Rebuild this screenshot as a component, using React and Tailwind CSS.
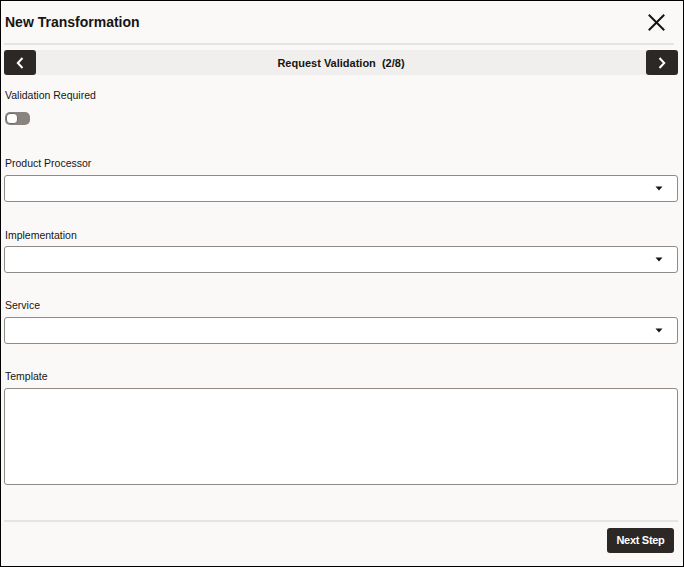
import React from "react";

function Caret() {
  return (
    <svg width="8" height="5" viewBox="0 0 8 5" className="mr-[14px]">
      <path d="M0.5 0.5 L7.5 0.5 L4 4.5 Z" fill="#161513" />
    </svg>
  );
}

function Select() {
  return (
    <div className="h-[27px] bg-white border border-[#8f8b87] rounded-[3px] flex items-center justify-end">
      <Caret />
    </div>
  );
}

function Label({ children, className = "" }) {
  return (
    <div className={"text-[10.5px] leading-[14px] text-[#161513] pl-[1px] " + className}>{children}</div>
  );
}

export default function App() {
  return (
    <div className="w-[684px] h-[567px] border border-black bg-[#faf9f8] flex flex-col font-['Liberation_Sans',sans-serif] text-[#161513] overflow-hidden">
      <div className="h-[42px] flex items-center justify-between pl-[4px] pr-[18px]">
        <div className="text-[14px] font-bold">New Transformation</div>
        <svg width="17" height="17" viewBox="0 0 17 17">
          <path d="M1.5 1.5 L15.5 15.5 M15.5 1.5 L1.5 15.5" stroke="#161513" strokeWidth="2" strokeLinecap="square" fill="none" />
        </svg>
      </div>
      <div className="h-[2px] bg-[#e6e4e1] ml-[3px] mr-[9px]" />
      <div className="pl-[3px] pr-[5px] flex flex-col">
        <div className="mt-[5px] h-[25px] bg-[#f0efed] flex items-center justify-between">
          <div className="w-[32px] h-[25px] bg-[#2b2826] rounded-[3px] flex items-center justify-center">
            <svg width="8" height="12" viewBox="0 0 8 12">
              <path d="M6.5 1 L1.8 6 L6.5 11" stroke="white" strokeWidth="2" fill="none" />
            </svg>
          </div>
          <div className="text-[11px] font-bold whitespace-pre pt-[2px]">Request Validation  (2/8)</div>
          <div className="w-[32px] h-[25px] bg-[#2b2826] rounded-[3px] flex items-center justify-center">
            <svg width="8" height="12" viewBox="0 0 8 12">
              <path d="M1.5 1 L6.2 6 L1.5 11" stroke="white" strokeWidth="2" fill="none" />
            </svg>
          </div>
        </div>

        <Label className="mt-[13px]">Validation Required</Label>
        <div className="mt-[10px] ml-[1px] w-[25px] h-[13px] rounded-[5px] bg-[#8a847f] relative">
          <div className="absolute left-[1px] top-[1px] w-[12px] h-[11px] rounded-[4px] bg-white border border-[#6f6a66]" />
        </div>

        <Label className="mt-[31px]">Product Processor</Label>
        <div className="mt-[5px]"><Select /></div>

        <Label className="mt-[26px]">Implementation</Label>
        <div className="mt-[4px]"><Select /></div>

        <Label className="mt-[25px]">Service</Label>
        <div className="mt-[5px]"><Select /></div>

        <Label className="mt-[25px]">Template</Label>
        <div className="mt-[5px] h-[97px] bg-white border border-[#8f8b87] rounded-[3px]" />

        <div className="mt-[35px] h-[2px] bg-[#e6e4e1]" />
        <div className="mt-[6px] flex justify-end pr-[4px]">
          <div className="w-[67px] h-[25px] bg-[#2b2826] rounded-[3px] flex items-center justify-center text-white text-[11px] font-bold tracking-[-0.3px]">
            Next Step
          </div>
        </div>
      </div>
    </div>
  );
}
